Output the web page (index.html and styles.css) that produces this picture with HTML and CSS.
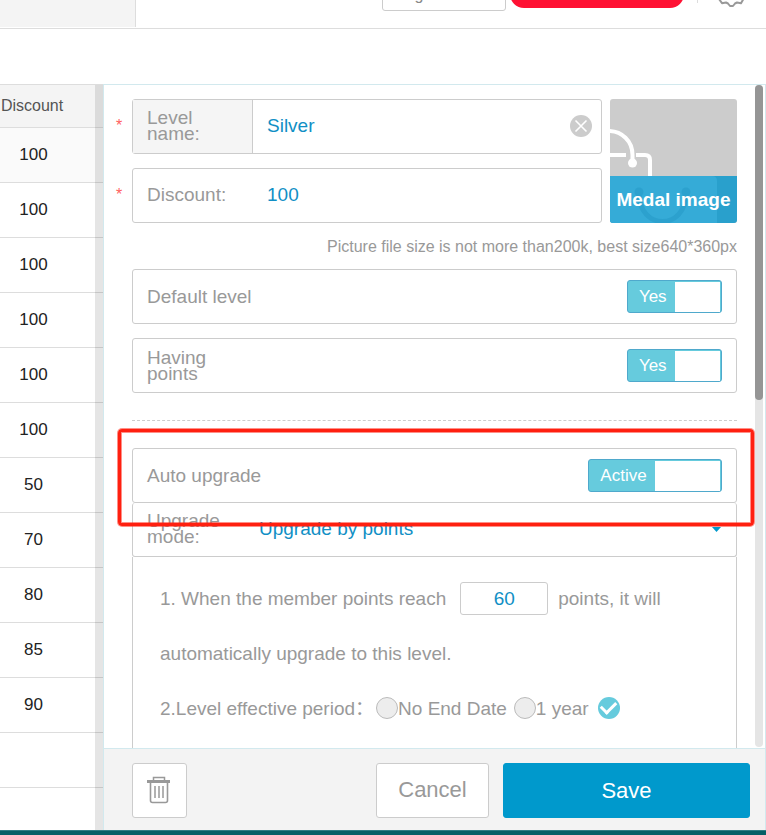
FILE: index.html
```html
<!DOCTYPE html>
<html lang="en">
<head>
<meta charset="utf-8">
<title>Member levels</title>
<link rel="stylesheet" href="styles.css">
</head>
<body>
<header class="topbar">
  <div class="topbar-side"></div>
  <button class="lang" type="button">English</button>
  <div class="pill"></div>
  <div class="divider"></div>
  <svg class="gear" width="26" height="30" viewBox="0 0 26 30" fill="none" stroke="#999" stroke-width="2" stroke-linejoin="round"><path d="M12 3.700h3l2 3 2 1 4-1 2 4-2 3v5l2 3-2 3.500-4-.7-2 1-2 2.500h-3l-2-2.500-2-1-4 .7-2.500-3.500 2.500-3v-5l-2.500-3 2.500-4 4 1 2-1z"/><circle cx="13.500" cy="16" r="4"/></svg>
</header>
<main class="content">
  <section class="levels">
    <table>
      <thead><tr><th>Discount</th></tr></thead>
      <tbody>
        <tr class="current"><td>100</td></tr>
        <tr><td>100</td></tr>
        <tr><td>100</td></tr>
        <tr><td>100</td></tr>
        <tr><td>100</td></tr>
        <tr><td>100</td></tr>
        <tr><td>50</td></tr>
        <tr><td>70</td></tr>
        <tr><td>80</td></tr>
        <tr><td>85</td></tr>
        <tr><td>90</td></tr>
        <tr><td></td></tr>
        <tr><td></td></tr>
      </tbody>
    </table>
    <div class="shade"></div>
  </section>
  <form class="panel">
    <div class="panel-body">
      <div class="fields">
        <div class="top">
          <div class="stack">
            <div class="field required">
              <label class="name tinted" for="level">Level name:</label>
              <input id="level" type="text" value="Silver">
              <button class="clear" type="button" aria-label="Clear">
                <svg width="22" height="22" viewBox="0 0 22 22"><circle cx="11" cy="11" r="11" fill="#ccc"/><path d="M5.500 5.500l11 11M16.500 5.500l-11 11" stroke="#fff" stroke-width="1.600"/></svg>
              </button>
            </div>
            <div class="field required">
              <label class="name" for="discount">Discount:</label>
              <input id="discount" type="text" value="100">
            </div>
          </div>
          <button class="medal" type="button">
            <svg class="medal-art" viewBox="0 0 127 77" fill="none" stroke="#fff" stroke-width="4"><path d="M-2 32C12 32 22.500 42 22.500 56v6M-2 56h18M26 56h9q5 0 5 5v20"/><circle cx="22.500" cy="64" r="4.500" fill="#fff" stroke="none"/></svg>
            <span class="medal-label">
              <svg class="medal-shade" viewBox="0 0 127 47"><path d="M0 0h102q5 0 5 5v42H0z" fill="#35abd7"/><path d="M29 17c0 38 47 38 47 0" fill="none" stroke="#2ca1ce" stroke-width="5"/><circle cx="29" cy="16" r="4.500" fill="#2ca1ce"/><circle cx="76" cy="16" r="4.500" fill="#2ca1ce"/></svg>
              <span class="medal-text">Medal image</span>
            </span>
          </button>
        </div>
        <p class="hint">Picture file size is not more than200k, best size640*360px</p>
        <div class="stack">
          <div class="field">
            <span class="caption" id="c1">Default level</span>
            <button class="switch" type="button" role="switch" aria-checked="true" aria-labelledby="c1"><span class="on">Yes</span><span class="knob"></span></button>
          </div>
          <div class="field">
            <span class="caption narrow" id="c2">Having points</span>
            <button class="switch" type="button" role="switch" aria-checked="true" aria-labelledby="c2"><span class="on">Yes</span><span class="knob"></span></button>
          </div>
        </div>
        <hr>
        <div class="upgrade">
          <div class="field">
            <span class="caption" id="c3">Auto upgrade</span>
            <button class="switch wide" type="button" role="switch" aria-checked="true" aria-labelledby="c3"><span class="on">Active</span><span class="knob"></span></button>
          </div>
          <div class="field">
            <label class="name" for="mode">Upgrade mode:</label>
            <select id="mode"><option>Upgrade by points</option></select>
            <svg class="caret" width="9" height="5" viewBox="0 0 9 5"><path d="M0 0h9L4.500 5z" fill="#0099cc"/></svg>
          </div>
          <div class="rules">
            <div><label for="points">1. When the member points reach</label><input class="points" id="points" type="text" value="60"><span>points, it will</span> <span>automatically upgrade to this level.</span></div>
            <div class="period">2.Level effective period：<label><input type="radio" name="period">No End Date</label><label><input type="radio" name="period">1 year</label><input class="last" type="radio" name="period" checked aria-label="Custom period"></div>
          </div>
          <div class="highlight"></div>
        </div>
      </div>
      <div class="track"><div class="thumb"></div></div>
    </div>
    <footer class="actions">
      <button class="delete" type="button" aria-label="Delete">
        <svg width="24" height="28" viewBox="0 0 24 28" fill="none" stroke="#999"><path d="M6.500 5V1.500h11V5" stroke-width="1.500"/><path d="M0 5.500h23" stroke-width="3"/><path d="M3.500 7v17.500q0 2 2 2h13q2 0 2-2V7" stroke-width="1.600"/><path d="M8 10v12M12 10v12M16 10v12" stroke-width="1.500"/></svg>
      </button>
      <button class="cancel" type="button">Cancel</button>
      <button class="save" type="submit">Save</button>
    </footer>
  </form>
</main>
<div class="bottombar"></div>
</body>
</html>
```
FILE: styles.css
```css
* { box-sizing: border-box; }
body {
  margin: 0;
  height: 100vh;
  display: flex;
  flex-direction: column;
  overflow: hidden;
  background: #fff;
  color: #999;
  font: 19px/16px "Liberation Sans", "Noto Sans CJK SC", sans-serif;
}
button, input, select { font: inherit; color: inherit; margin: 0; padding: 0; border: 0; background: none; }
p { margin: 0; }

.topbar {
  flex: none;
  height: 29px;
  display: flex;
  align-items: flex-end;
  overflow: hidden;
  border-bottom: 1px solid #ddd;
}
.topbar-side { width: 136px; height: 27px; margin: 0 auto 1px 0; background: #f4f4f4; border-right: 1px solid #ddd; }
.lang {
  width: 124px;
  height: 32px;
  margin-bottom: 17px;
  padding-left: 12px;
  border: 1px solid #ccc;
  border-radius: 3px;
  color: #888;
  font-size: 16px;
  text-align: left;
}
.pill { width: 174px; height: 28px; margin: 0 13px 20px 4px; border-radius: 14px; background: #ff1133; }
.divider { width: 1px; height: 20px; margin: 0 20px 25px 0; background: #ddd; }
.gear { flex: none; margin: 0 22px 20px 0; }

.content { flex: 1; min-height: 0; display: flex; margin-top: 55px; }

.levels { flex: none; width: 103px; position: relative; overflow: hidden; border-top: 1px solid #ddd; }
table { width: 100%; border-collapse: separate; border-spacing: 0; font-size: 17px; color: #222; }
th, td { height: 55px; padding: 0 36px 0 0; border-bottom: 1px solid #ddd; font-weight: 400; text-align: center; }
th { height: 43px; padding-right: 39px; background: #f4f4f4; color: #555; font-size: 16px; }
.current td { background: #fafafa; }
.shade { position: absolute; inset: 0 0 0 auto; width: 8px; background: rgba(0, 0, 0, .1); }

.panel { flex: 1; min-width: 0; display: flex; flex-direction: column; border: 1px solid #d2e9ee; border-bottom: 0; }
.panel-body { flex: 1; min-height: 0; display: flex; overflow: hidden; padding-right: 2px; }
.fields { flex: 1; min-width: 0; padding: 14px 18px 0 28px; }
.track { flex: none; width: 8px; margin-bottom: 1px; border-radius: 4px; background: #e5e5e5; }
.thumb { height: 315px; border-radius: 4px; background: #959595; }

.top { display: flex; gap: 8px; }
.top .stack { flex: 1; min-width: 0; }
.stack { display: flex; flex-direction: column; gap: 14px; }
.field {
  position: relative;
  display: flex;
  align-items: center;
  height: 55px;
  padding-right: 14px;
  border: 1px solid #ccc;
  border-radius: 3px;
}
.field.required { padding-right: 9px; }
.required::before { content: "*"; position: absolute; left: -17px; top: 16px; color: #ff6060; font-size: 16px; line-height: 20px; }
.name { flex: none; width: 120px; height: 100%; display: flex; align-items: center; padding: 0 24px 2px 14px; }
.name[for="discount"] { padding-right: 0; }
.tinted { background: #f5f5f5; border-right: 1px solid #ccc; }
.caption { margin: 0 auto 0 14px; }
.narrow { width: 90px; }
.field input { flex: 1; min-width: 0; height: 53px; padding: 0 0 2px 14px; color: #118fc5; }
.clear { flex: none; height: 22px; margin-bottom: 2px; }
.clear svg { display: block; }

.medal {
  flex: none;
  width: 127px;
  height: 124px;
  display: flex;
  flex-direction: column;
  border-radius: 3px;
  overflow: hidden;
  background: #ccc;
}
.medal-art { width: 127px; height: 77px; }
.medal-label { display: grid; width: 100%; height: 47px; background: #29a0cc; color: #fff; font-weight: 700; }
.medal-label > * { grid-area: 1 / 1; }
.medal-shade { width: 127px; height: 47px; }
.medal-text { z-index: 1; align-self: center; text-align: center; white-space: nowrap; }
.hint { height: 46px; line-height: 48px; font-size: 16px; text-align: right; white-space: nowrap; }

.switch {
  flex: none;
  width: 95px;
  height: 33px;
  display: grid;
  grid-template-columns: 1fr 1fr;
  border: 1px solid #4fa9cc;
  border-radius: 3px;
  background: #66cbdd;
  color: #fff;
  font-size: 17px;
}
.switch.wide { width: 134px; }
.on { align-self: center; padding-left: 3px; }
.knob { height: 30px; margin: 1px 1px 0 0; background: #fff; }

hr { height: 1px; margin: 27px 0; border: 0; border-top: 1px dashed #ccc; }

.upgrade { position: relative; }
.upgrade .field + .field { height: 54px; border-top: 0; }
.upgrade .name { padding-right: 16px; }
select { flex: 1; min-width: 0; height: 53px; appearance: none; padding: 0 0 2px 6px; color: #118fc5; line-height: 24px; }
.caret { flex: none; margin-right: 1px; }
.rules { height: 220px; padding: 14px 27px; border: solid #ccc; border-width: 0 1px; line-height: 55px; }
.points { width: 88px; height: 33px; margin: 0 10px 0 14px; border: 1px solid #ccc; border-radius: 3px; color: #118fc5; text-align: center; }
.period { white-space: nowrap; }
.period label { margin: 0 5px 0 2px; }
input[type="radio"] { appearance: none; width: 22px; height: 22px; border: 1px solid #bbb; border-radius: 50%; background: #ededed; vertical-align: middle; margin-top: -4px; }
input[type="radio"]:checked { border: 0; background: #66cbdd; display: inline-grid; place-items: center; }
input[type="radio"]:checked::before { content: ""; width: 12px; height: 7px; border: solid #fff; border-width: 0 0 3px 3px; transform: translateY(-2px) rotate(-45deg); }
.period .last { margin-left: 4px; }
.highlight {
  position: absolute;
  inset: -19px -17px auto -14px;
  height: 97px;
  border: 3px solid #ff2010;
  border-radius: 4px;
  box-shadow: 0 0 0 1px rgba(255, 32, 16, .5), inset 0 0 0 1px rgba(255, 32, 16, .5);
  pointer-events: none;
}

.actions { flex: none; display: flex; align-items: center; gap: 14px; padding: 14px 15px 12px 28px; border-top: 1px solid #d2e9ee; background: #f3f3f3; }
.actions button { height: 55px; padding-bottom: 2px; border: 1px solid #ccc; border-radius: 3px; background: #fff; font-size: 22px; }
.actions .delete { width: 55px; margin-right: auto; padding-right: 2px; display: grid; place-items: center; }
.actions .cancel { width: 113px; }
.actions .save { width: 247px; padding-bottom: 0; border-color: #0099cc; background: #0099cc; color: #fff; }

.bottombar { flex: none; height: 5px; background: #055f66; border-top: 1px solid #2f7d83; }
```
